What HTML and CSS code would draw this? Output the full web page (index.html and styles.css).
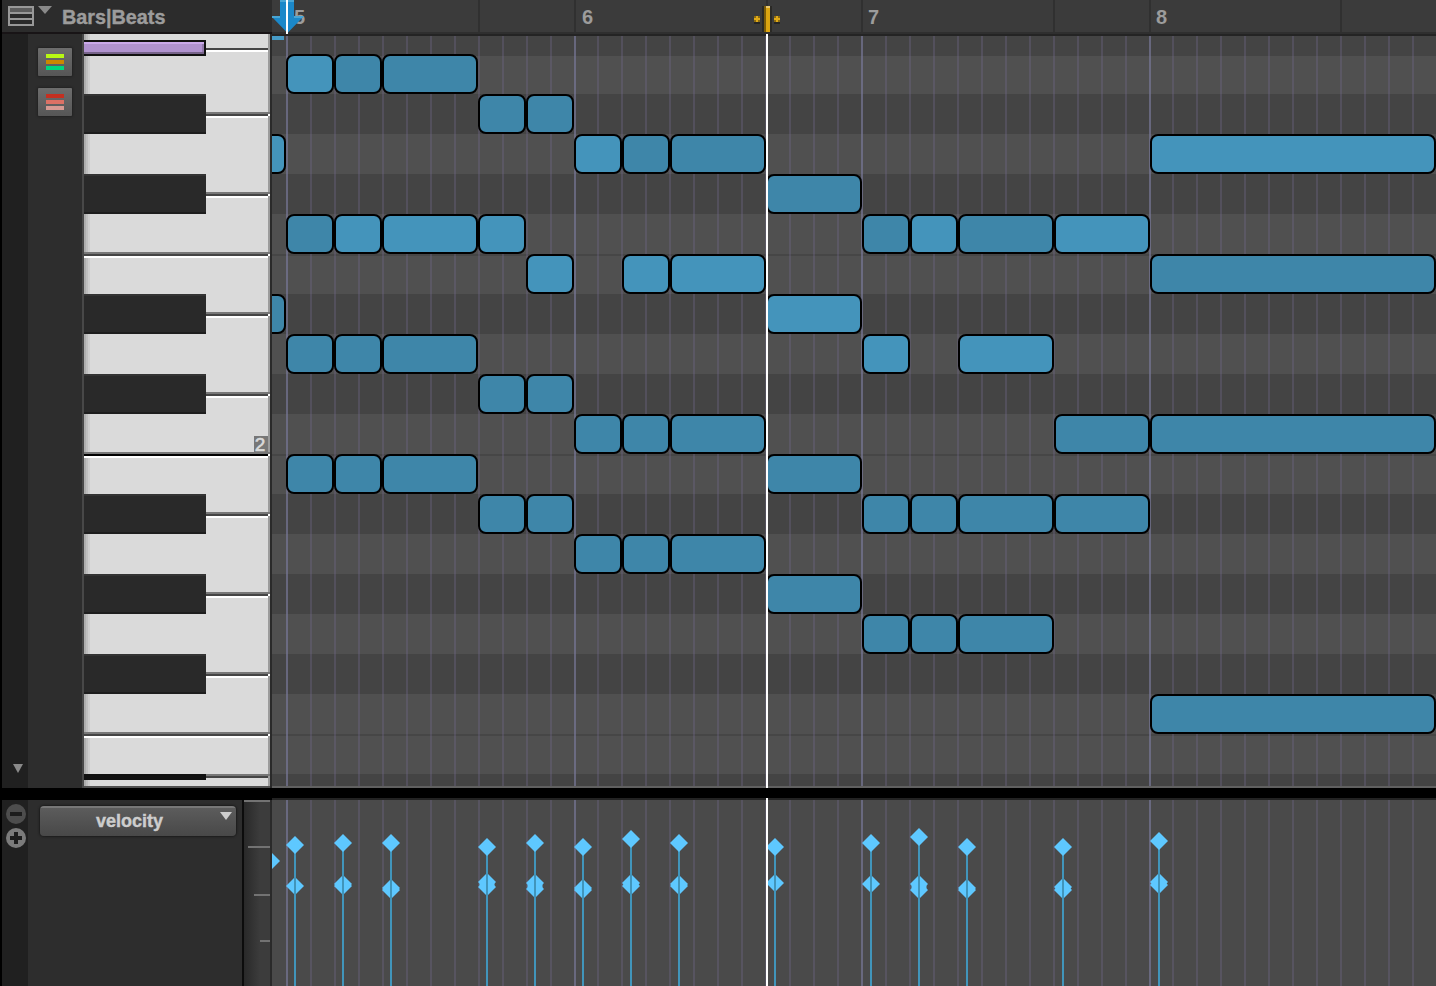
FILE: index.html
```html
<!DOCTYPE html>
<html lang="en">
<head>
  <meta charset="UTF-8">
  <title>MIDI Editor</title>
  <meta name="viewport" content="width=device-width, initial-scale=1.0">
  <link rel="stylesheet" href="styles.css">
</head>
<body>
  <div class="editor">
    <header class="topbar">
      <div class="ruler-name">
        <svg class="menu-icon" width="26" height="20" viewBox="0 0 26 20">
          <rect x="1" y="1" width="24" height="18" fill="#2a2a2a" stroke="#989898" stroke-width="2"/>
          <rect x="2" y="2" width="22" height="4" fill="#5c5c5c"/>
          <path d="M1 7h24M1 13h24" stroke="#989898" stroke-width="2"/>
        </svg>
        <svg class="menu-arrow" width="14" height="8" viewBox="0 0 14 8"><path d="M0 0h14L7 8z" fill="#8a8a8a"/></svg>
        <span class="ruler-label">Bars|Beats</span>
      </div>
      <div class="ruler">
        <svg id="ticks" width="1164" height="36"></svg>
        <span class="bar-number" style="left: 22px">5</span>
        <span class="bar-number" style="left: 310px">6</span>
        <span class="bar-number" style="left: 596px">7</span>
        <span class="bar-number" style="left: 884px">8</span>
        <svg class="markers" width="1164" height="36">
          <path d="M8 0H22V16H32L15.500 33L0 17V16H8z" fill="#1b88c9"/>
          <path d="M8 0H22V2H8zM0 16H8V18H0zM22 16H32L30 18H22z" fill="#48a5d4"/>
          <rect x="14" y="0" width="2" height="34" fill="#fff"/>
          <rect x="490" y="6" width="10" height="26" fill="#2b2a26"/>
          <rect x="492" y="6" width="2" height="26" fill="#7b5b08"/>
          <rect x="494" y="6" width="4" height="26" fill="#dca511"/>
          <rect x="494" y="6" width="4" height="2" fill="#e9c870"/>
          <path d="M482 22h6v2h-6zM502 22h6v2h-6z" fill="#262626"/>
          <path d="M482 16h6v6h-6zM502 16h6v6h-6z" fill="#8a6a12"/>
          <path d="M484 16h2v2h2v2h-2v2h-2v-2h-2v-2h2zM504 16h2v2h2v2h-2v2h-2v-2h-2v-2h2z" fill="#e0aa18"/>
          <rect x="494" y="34" width="2" height="2" fill="#fff"/>
        </svg>
      </div>
    </header>

    <main class="piano-roll">
      <div class="scroll-strip">
        <svg width="10" height="9" viewBox="0 0 10 9"><path d="M0 0h10L5 9z" fill="#8a8a8a"/></svg>
      </div>
      <div class="tools">
        <button class="tool"><i class="lime"></i><i class="orange"></i><i class="green"></i></button>
        <button class="tool"><i class="red"></i><i class="coral"></i><i class="pink"></i></button>
      </div>
      <div class="keyboard">
        <svg id="keys" width="186" height="754"></svg>
        <span class="octave">2</span>
      </div>
      <div class="notes"><svg id="notes" width="1164" height="752"></svg></div>
    </main>

    <section class="velocity-lane">
      <div class="lane-strip">
        <svg width="22" height="46" viewBox="0 0 22 46">
          <circle cx="11" cy="11" r="10" fill="#4d4d4d"/>
          <path d="M5 11h12" stroke="#1d1d1d" stroke-width="4"/>
          <circle cx="11" cy="35" r="10" fill="#7b7b7b"/>
          <path d="M5 35h12M11 29v12" stroke="#1d1d1d" stroke-width="4"/>
        </svg>
      </div>
      <div class="lane-header">
        <button class="lane-select">
          velocity
          <svg width="12" height="8" viewBox="0 0 12 8"><path d="M0 0h12L6 8z" fill="#cdcdcd"/></svg>
        </button>
      </div>
      <div class="scale">
        <svg width="26" height="186"><path d="M0 1h26M4 47h22M10 95h16M16 141h10" stroke="#737373" stroke-width="2"/></svg>
      </div>
      <div class="velocities"><svg id="velocities" width="1164" height="188"></svg></div>
    </section>
  </div>
  <script src="script.js"></script>
</body>
</html>
```
FILE: styles.css
```css
* {
  box-sizing: border-box;
}
body {
  margin: 0;
  background: #000;
  font-family: "Liberation Sans", Arial, sans-serif;
  overflow: hidden;
}
svg {
  display: block;
}
button {
  border: 0;
  padding: 0;
  font-family: inherit;
}
.editor {
  width: 1436px;
  height: 986px;
  padding-left: 2px;
}
.topbar {
  display: flex;
  height: 34px;
}
.ruler-name {
  display: flex;
  align-items: flex-start;
  width: 270px;
  padding: 6px 0 0 6px;
  background: #2c2c2c;
  border-bottom: 2px solid #181416;
  color: #9c9c9c;
}
.menu-arrow {
  margin-left: 4px;
}
.ruler-label {
  margin-left: 10px;
  font-size: 19.8px;
  font-weight: bold;
  line-height: 23px;
  -webkit-text-stroke: 0.4px #9c9c9c;
}
.ruler {
  position: relative;
  z-index: 2;
  width: 1164px;
  height: 36px;
  background: linear-gradient(#3b3b3b 32px, #2f2f2f 32px, #2f2f2f 34px, #242424 34px);
}
.bar-number {
  position: absolute;
  top: 6px;
  color: #9c9c9c;
  font-size: 20px;
  font-weight: bold;
  line-height: 23px;
}
.markers {
  position: absolute;
  top: 0;
  left: 0;
}

/* piano roll */
.piano-roll {
  display: flex;
  height: 754px;
}
.scroll-strip,
.lane-strip {
  width: 26px;
  background: #202020;
}
.scroll-strip {
  display: flex;
  align-items: flex-end;
  padding: 0 0 15px 11px;
}
.tools {
  display: flex;
  flex-direction: column;
  gap: 12px;
  width: 56px;
  padding: 14px 0 0 10px;
  background: #2d2d2d;
  border-right: 2px solid #484848;
}
.tool {
  display: flex;
  flex-direction: column;
  gap: 2px;
  width: 34px;
  height: 28px;
  padding: 6px 8px;
  background: linear-gradient(#6d6d6d, #565656);
  border-radius: 1px;
  box-shadow: 0 0 2px 1px #232323;
}
.tool i {
  height: 4px;
}
.lime { background: #b8f813; }
.orange { background: #cb8800; }
.green { background: #00d57c; }
.red { background: #c42f20; }
.coral { background: #dc7165; }
.pink { background: #d79a93; }
.keyboard {
  position: relative;
  width: 188px;
  border-right: 2px solid #2a2a2a;
}
.octave {
  position: absolute;
  right: 2px;
  top: 402px;
  width: 14px;
  height: 16px;
  padding-right: 2px;
  background: #777;
  color: #dadada;
  font-size: 19px;
  line-height: 18px;
  text-align: center;
  -webkit-text-stroke: 0.6px #dadada;
}
.notes {
  padding-top: 2px;
}

/* velocity lane */
.velocity-lane {
  display: flex;
  height: 188px;
  margin-top: 10px;
}
.lane-strip,
.lane-header,
.scale {
  height: 186px;
  margin-top: 2px;
}
.lane-strip {
  padding: 3px 0 0 3px;
}
.lane-header {
  width: 216px;
  padding: 6px 0 0 12px;
  background: #2d2d2d;
  border-right: 2px solid #0c0c0c;
}
.lane-select {
  position: relative;
  width: 196px;
  height: 30px;
  padding-right: 17px;
  border-radius: 4px;
  background: linear-gradient(#777 2px, #5c5c5c 2px, #484848);
  box-shadow: 0 0 2px 1px #1c1c1c;
  color: #cdcdcd;
  font-size: 18px;
  font-weight: bold;
  -webkit-text-stroke: 0.4px #cdcdcd;
}
.lane-select svg {
  position: absolute;
  top: 6px;
  right: 4px;
}
.scale {
  width: 28px;
  background: linear-gradient(90deg, #292929, #3c3c3c 16px);
  border-right: 2px solid #2a2a2a;
}
```
FILE: script.js
```javascript
const STEP = 48;
const FIRST_BAR = 14;

function rect(x, y, w, h, fill, extra = '') {
  return `<rect x="${x}" y="${y}" width="${w}" height="${h}" fill="${fill}" ${extra}/>`;
}

function draw(id, content) {
  document.getElementById(id).innerHTML = content;
}

function gridLines(top, height) {
  let out = '';
  for (let i = 0; i < 48; i++) {
    const x = FIRST_BAR + i * 24 - (i > 12 ? 1 : 0) - (i > 36 ? 1 : 0);
    const color = i % 12 === 0 ? 'rgba(125,125,160,.62)' : 'rgba(118,110,150,.3)';
    out += rect(x, top, 2, height, color);
  }
  return out;
}

// ruler ticks
draw('ticks', [14, 206, 302, 494, 589, 781, 877, 1068].map(x => rect(x, 0, 2, 32, '#303030')).join(''));

// keyboard
function drawKeys() {
  let out = rect(0, 0, 186, 752, '#dadada');
  out += rect(0, 0, 2, 752, '#adadad') + rect(2, 0, 2, 752, '#bebebe') + rect(4, 0, 2, 752, '#cdcdcd');
  out += rect(184, 0, 2, 752, '#9c9c9c');
  out += rect(122, 14, 62, 2, '#444') + rect(122, 16, 62, 2, '#fff');

  [80, 160, 280, 360, 480, 560, 640, 742].forEach(y => {
    out += rect(122, y - 2, 64, 2, '#777') + rect(122, y, 62, 2, '#444');
    if (y < 742) out += rect(122, y + 2, 62, 2, '#fff') + rect(184, y, 2, 2, '#fff');
  });
  [220, 420, 700].forEach(y => {
    out += rect(0, y - 2, 186, 2, '#777') + rect(0, y, 184, 2, y === 420 ? '#000' : '#444');
    out += rect(0, y + 2, 184, 2, '#fff') + rect(184, y, 2, 2, '#fff');
  });
  [60, 140, 260, 340, 460, 540, 620].forEach(y => {
    out += rect(0, y, 122, 40, '#292929') + rect(0, y, 122, 2, '#333') + rect(0, y + 38, 122, 2, '#1d1d1d');
  });
  out += rect(0, 740, 122, 6, '#111');

  // highlighted key
  out += rect(0, 6, 122, 16, '#111') + rect(0, 8, 120, 12, '#b092cf');
  out += rect(0, 8, 120, 2, '#caa9ea') + rect(0, 18, 120, 2, '#766389') + rect(118, 10, 2, 8, '#927aaa');
  out += rect(0, 752, 186, 2, '#505050');
  draw('keys', out);
}

// [row, step, length, loud]
const notes = [
  [0, 0, 1, 1], [0, 1, 1, 0], [0, 2, 2, 0],
  [1, 4, 1, 0], [1, 5, 1, 0],
  [2, -1, 1, 1], [2, 6, 1, 1], [2, 7, 1, 0], [2, 8, 2, 0], [2, 18, 6, 1],
  [3, 10, 2, 0],
  [4, 0, 1, 0], [4, 1, 1, 1], [4, 2, 2, 1], [4, 4, 1, 1],
  [4, 12, 1, 0], [4, 13, 1, 1], [4, 14, 2, 0], [4, 16, 2, 1],
  [5, 5, 1, 1], [5, 7, 1, 1], [5, 8, 2, 1], [5, 18, 6, 0],
  [6, -1, 1, 0], [6, 10, 2, 1],
  [7, 0, 1, 0], [7, 1, 1, 0], [7, 2, 2, 0], [7, 12, 1, 1], [7, 14, 2, 1],
  [8, 4, 1, 0], [8, 5, 1, 0],
  [9, 6, 1, 0], [9, 7, 1, 0], [9, 8, 2, 0], [9, 16, 2, 0], [9, 18, 6, 0],
  [10, 0, 1, 0], [10, 1, 1, 0], [10, 2, 2, 0], [10, 10, 2, 0],
  [11, 4, 1, 0], [11, 5, 1, 0], [11, 12, 1, 0], [11, 13, 1, 0], [11, 14, 2, 0], [11, 16, 2, 0],
  [12, 6, 1, 0], [12, 7, 1, 0], [12, 8, 2, 0],
  [13, 10, 2, 0],
  [14, 12, 1, 0], [14, 13, 1, 0], [14, 14, 2, 0],
  [16, 18, 6, 0]
];

function drawNotes() {
  let out = rect(0, 0, 1164, 750, '#505050') + rect(0, 0, 1164, 20, '#444');
  [1, 3, 6, 8, 11, 13, 15, 18].forEach(row => {
    out += rect(0, 18 + row * 40, 1164, 40, '#444');
  });
  [218, 418, 698].forEach(y => {
    out += rect(0, y, 1164, 2, '#464646');
  });
  out += gridLines(0, 750);
  out += rect(0, 0, 12, 4, '#479cc7');

  notes.forEach(([row, step, length, loud]) => {
    const x = FIRST_BAR + step * STEP;
    const w = Math.min(length * STEP, 1164 - x);
    const fill = loud ? '#4494bb' : '#3e86a9';
    out += rect(x + 1, 19 + row * 40, w - 2, 38, fill, 'rx="7" stroke="#000" stroke-width="2"');
  });
  out += rect(0, 750, 1164, 2, '#616161');
  out += rect(494, 0, 2, 752, '#fff');
  draw('notes', out);
}

// [step, top value, lower values]
const velocities = [
  [0, 845, [886]],
  [1, 843, [884, 886]],
  [2, 843, [888, 890]],
  [4, 847, [882, 887]],
  [5, 843, [883, 889]],
  [6, 847, [888, 890]],
  [7, 839, [883, 886]],
  [8, 843, [884, 886]],
  [10, 847, [883]],
  [12, 843, [884]],
  [13, 837, [884, 890]],
  [14, 847, [888, 890]],
  [16, 847, [887, 890]],
  [18, 841, [882, 885]]
];

function diamond(x, y) {
  return `<path d="M${x} ${y - 9}l9 9l-9 9l-9-9z" fill="#5ec8ff"/>`;
}

// stacked values merge into one blob with small notches at the sides
function stack(x, values) {
  const top = values[0];
  const bottom = values[values.length - 1];
  let out = values.map(y => diamond(x, y)).join('');
  if (bottom > top) out += rect(x - 7.5, top - 1, 15, bottom - top + 2, '#5ec8ff');
  return out;
}

function drawVelocities() {
  let out = rect(0, 0, 1164, 188, '#4a4a4a') + rect(0, 0, 1164, 2, '#232323') + gridLines(2, 186);
  out += diamond(-1, 63);
  velocities.forEach(([step, top, lower]) => {
    const x = FIRST_BAR + 9 + step * STEP;
    out += stack(x, lower.map(y => y - 798));
    out += rect(x - 1, top - 798, 2, 200, '#4195bb');
    out += diamond(x, top - 798);
  });
  out += rect(494, 0, 2, 188, '#fff');
  draw('velocities', out);
}

drawKeys();
drawNotes();
drawVelocities();
```
